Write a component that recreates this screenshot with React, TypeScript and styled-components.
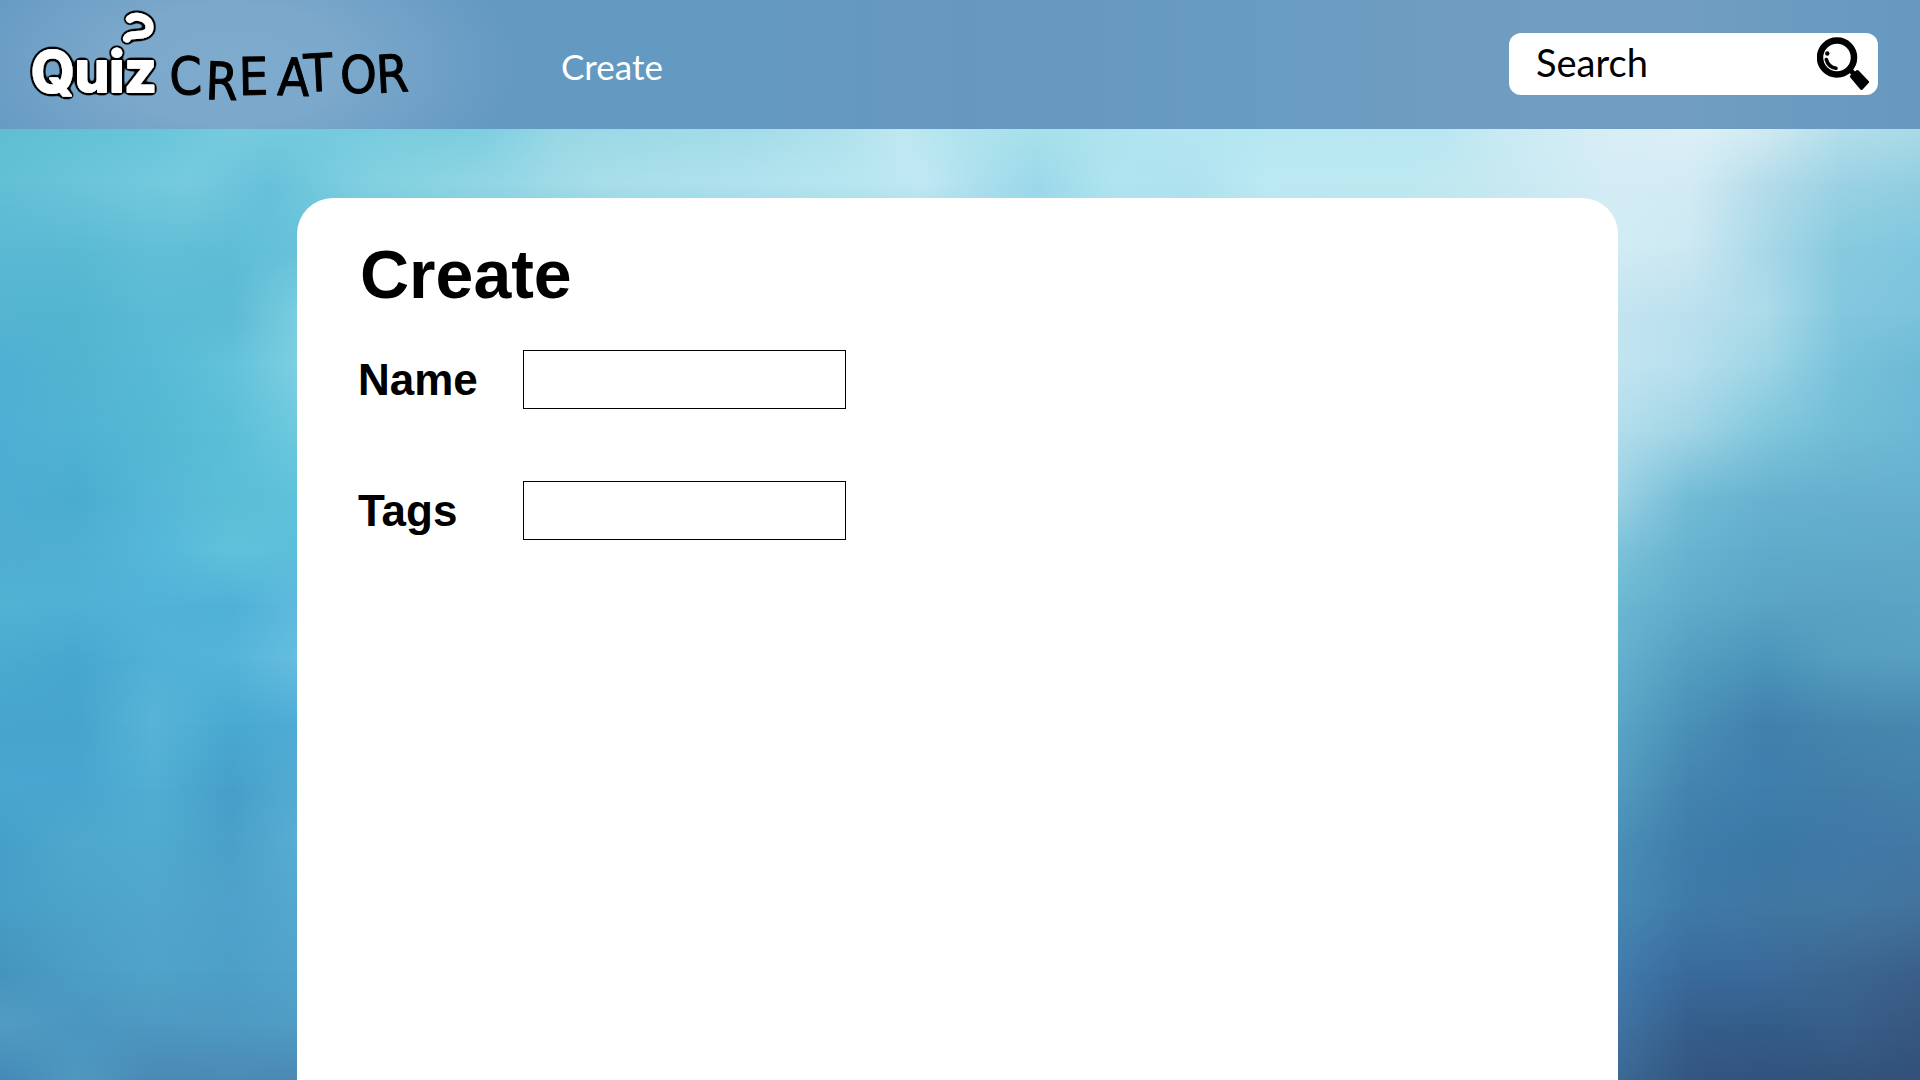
import React from "react";
import styled, { createGlobalStyle } from "styled-components";

type Stop = [number, string];
type Row = { y: number; stops: Stop[] };

const sideColumns = [0, 4, 8, 12, 16, 84, 88, 92, 96, 100];
const row = (y: number, colors: string): Row => ({
  y,
  stops: colors.split(" ").map((c, i) => [sideColumns[i], "#" + c] as Stop),
});

/* Colour rows of the water backdrop; each one blends into the next. */
const water: Row[] = [
  {
    y: 12,
    stops: [
      [0, "#5fbfd2"], [8, "#68c5da"], [12, "#77cbde"], [16, "#74cadd"],
      [21, "#7bcddf"], [25, "#7ccee0"], [29, "#98d8e5"], [39, "#a4dce8"],
      [44, "#b0e2ec"], [47, "#c0e8f1"], [50, "#b0e4ee"], [54, "#a8e0ea"],
      [59, "#b0e5f0"], [68, "#b8e8f3"], [75, "#b9e7f2"], [78, "#c8eaf3"],
      [84, "#d9eef6"], [89, "#dbeff6"], [92, "#d0eaf2"], [96, "#b2deea"],
      [100, "#aadbe6"],
    ],
  },
  {
    y: 17,
    stops: [
      [0, "#62bfd5"], [8, "#72c9de"], [10, "#76cadf"], [14, "#66c1da"],
      [19, "#80d0e0"], [26, "#94d6e4"], [31, "#a8dde9"], [39, "#b0e2ee"],
      [45, "#b8e6f0"], [48, "#c0e8f3"], [51, "#acdfed"], [54, "#9ad8ea"],
      [58, "#b0e4ef"], [62, "#aee2ef"], [66, "#bce9f2"], [73, "#bce8f0"],
      [77, "#c4e8f0"], [84, "#d4ecf5"], [88, "#d3ebf4"], [92, "#b4dcea"],
      [96, "#9ad2e4"], [100, "#92cee0"],
    ],
  },
  row(23, "5bb9d3 5bbad3 62bfd6 5fbdd5 68c3da d2ecf4 cce8f2 a8d8e8 87cade 80c7de"),
  row(29, "55b5d1 54b5d1 5bbbd5 5cbad4 7dcfe2 c3e4f0 bce0ee acdae9 82c7de 7cc3dc"),
  row(34, "4fafd3 53b4d0 57bad6 62c2da 80d0e4 c3e4f0 b6dfed 9cd4e5 78c2db 6fb9d6"),
  row(40, "4eafd4 51b3d3 54b8d3 5bbfd8 70cade b2deec a0d4e5 80c7dc 72bcd6 6cb7d4"),
  row(46, "4eaed2 4aadcf 55b7d6 5bbed7 5fc2da 9ed3e4 72bcd6 69b2d0 66b0ce 66b0ce"),
  row(51, "4fadd1 50afd3 55b7da 60c2da 5cbeda 7ec3da 68b3d0 60abcb 60aaca 60a9c8"),
  row(56, "51b2d3 50b1d5 52b3d8 50b1d7 60badd 6cb9d3 60abca 5aa3c4 5aa2c3 5ca4c3"),
  row(61, "4babd0 48a7cf 52b1d7 55b4d9 68bfe1 66b1ce 549fc2 4c95bb 559ec0 589fc0"),
  row(67, "47a5cd 46a4cd 58b4d7 49a9d1 50acd5 5ba7c7 4a90b7 4180ad 4686ae 4788af"),
  row(73, "49a6cf 49a5cf 52aed3 469fca 55add3 549cc0 4384af 3f7eac 427da8 4480aa"),
  row(78, "459fca 4fa8cc 50abcf 4aa0c8 5aafd5 4a90b7 3f7dab 3b78a5 4079a8 4378a5"),
  row(84, "479ec6 4ca3c9 51a6cc 4ea2ca 55a8ce 4789b4 3f7aa8 4077a2 4277a1 42739d"),
  row(90, "4594bd 4c9dc4 50a3c9 4d9fc7 53a4cb 417cae 3a6a9c 3b6a9b 3c668f 3a6089"),
  row(95, "529cc3 4a96c0 4d98c1 4d99c2 509dc4 4174a4 365e8c 345c88 375f8a 375780"),
  row(100, "4389b5 4f98c0 4a89b5 4c8ab4 4a88b2 3c6a96 33567f 30547e 33537b 32507a"),
];

const GlobalStyle = createGlobalStyle`
  *, *::before, *::after { box-sizing: border-box; }
  body {
    margin: 0;
    font-family: "Liberation Sans", Arial, sans-serif;
    color: #000;
  }
`;

const Page = styled.div`
  position: relative;
  isolation: isolate;
  display: flex;
  flex-direction: column;
  min-height: 100vh;
`;

const Backdrop = styled.div`
  position: absolute;
  inset: 0;
  z-index: -1;
  display: grid;
`;

const WaterRow = styled.div<{ $stops: Stop[]; $from: number; $to: number }>`
  grid-area: 1 / 1;
  background: linear-gradient(
    to right,
    ${(p) => p.$stops.map(([x, c]) => `${c} ${x}%`).join(", ")}
  );
  mask-image: linear-gradient(
    to bottom,
    transparent ${(p) => p.$from}%,
    #000 ${(p) => p.$to}%
  );
`;

const Header = styled.header`
  display: flex;
  align-items: center;
  height: 129px;
  padding: 0 42px 2px 24px;
  background:
    radial-gradient(ellipse 290px 150px at 230px 64px, #7fabcd 0%, #7ba8cb 40%, rgba(123, 168, 203, 0) 100%),
    linear-gradient(to right, #6398c2 0%, #6499c1 40%, #6697bf 50%, #699cc2 66%, #6f9cc0 75%, #709dc1 88%, #6698c0 100%);
`;

const LogoLink = styled.a`
  display: block;
  line-height: 0;
`;

const QuizWord = styled.text`
  font: 700 56px Inter, "Liberation Sans", sans-serif;
  fill: #fff;
  stroke: #fff;
  stroke-width: 2px;
  stroke-linejoin: round;
`;

const CreatorWord = styled.text`
  font: 400 52px "Liberation Sans Narrow", "DejaVu Sans Condensed", sans-serif;
  fill: #000;
  stroke: #000;
  stroke-width: 1px;
  stroke-linejoin: round;
`;

const Nav = styled.nav`
  flex: 1;
  padding: 4px 0 0 137px;
`;

const NavLink = styled.a`
  font: 400 35px/48px Lato, sans-serif;
  color: #fff;
  text-decoration: none;
`;

const SearchForm = styled.form`
  display: flex;
  align-items: center;
  width: 369px;
  height: 62px;
  padding-right: 9px;
  border-radius: 12px;
  background: #fff;
`;

const SearchInput = styled.input`
  flex: 1;
  min-width: 0;
  height: 62px;
  padding: 0 0 4px 27px;
  border: 0;
  outline: 0;
  background: transparent;
  font: 400 38px Lato, sans-serif;
  color: #000;

  &::placeholder {
    color: #000;
    opacity: 1;
  }
`;

const SearchButton = styled.button`
  padding: 0;
  border: 0;
  background: none;
  line-height: 0;
  cursor: pointer;
`;

const Main = styled.main`
  flex: 1;
  display: flex;
  padding: 69px 302px 0 297px;
`;

const Panel = styled.section`
  flex: 1;
  padding: 36px 61px;
  border-radius: 36px 36px 0 0;
  background: #fff;
`;

const Title = styled.h1`
  margin: 0 0 36px;
  padding-left: 2px;
  font-size: 68px;
  line-height: 80px;
  font-weight: 700;
`;

const Fields = styled.form`
  display: grid;
  grid-template-columns: 165px 323px;
  align-items: center;
  row-gap: 72px;
`;

const Label = styled.label`
  font-size: 44px;
  line-height: 48px;
  font-weight: 700;
`;

const TextBox = styled.input`
  width: 100%;
  height: 59px;
  padding: 0 12px;
  border: 1px solid #000;
  border-radius: 0;
  background: #fff;
  font-family: inherit;
  font-size: 28px;
`;

function Logo() {
  return (
    <svg width="400" height="127" viewBox="24 0 400 127" role="img" aria-label="Quiz Creator">
      <defs>
        <filter id="outline" x="-10%" y="-20%" width="120%" height="140%">
          <feGaussianBlur in="SourceAlpha" stdDeviation="2" />
          <feComponentTransfer result="edge">
            <feFuncA type="linear" slope="8" intercept="-0.6" />
          </feComponentTransfer>
          <feMerge>
            <feMergeNode in="edge" />
            <feMergeNode in="SourceGraphic" />
          </feMerge>
        </filter>
      </defs>
      <g filter="url(#outline)">
        <QuizWord x="31" y="92">Quiz</QuizWord>
        <path
          d="M130 19 C136 14 149.500 18 149.500 27 C149.500 34.500 142 35 136 35 C131 35 128 36 127 38.500"
          fill="none"
          stroke="#fff"
          strokeWidth="8"
          strokeLinecap="round"
        />
      </g>
      <CreatorWord
        x="170 205 239 277 305 340 377"
        y="95 99 95 95 92 93 93"
        rotate="-2 2 -1 2 -3 0 -3"
      >
        CREATOR
      </CreatorWord>
    </svg>
  );
}

function Magnifier() {
  return (
    <svg width="52" height="53" viewBox="0 0 52 53" aria-hidden="true">
      <circle cx="20" cy="20.500" r="17" fill="none" stroke="#000" strokeWidth="6.500" />
      <path d="M32 32 L38 38" stroke="#000" strokeWidth="5" />
      <circle cx="10.300" cy="16.500" r="2.200" />
      <path d="M9.300 22.500 C10.500 27 14 30.500 19 31.300" fill="none" stroke="#000" strokeWidth="3.600" strokeLinecap="round" />
      <path d="M34.500 39.500 L40.500 34.500 L50.500 45 L44.500 51.500 Z" stroke="#000" strokeWidth="3" strokeLinejoin="round" />
    </svg>
  );
}

export default function App() {
  return (
    <Page>
      <GlobalStyle />
      <Backdrop>
        {water.map((r, i) => (
          <WaterRow key={r.y} $stops={r.stops} $from={i ? water[i - 1].y : -1} $to={i ? r.y : 0} />
        ))}
      </Backdrop>
      <Header>
        <LogoLink href="#home">
          <Logo />
        </LogoLink>
        <Nav>
          <NavLink href="#create">Create</NavLink>
        </Nav>
        <SearchForm role="search" onSubmit={(e) => e.preventDefault()}>
          <SearchInput type="text" placeholder="Search" aria-label="Search" />
          <SearchButton type="submit" aria-label="Submit search">
            <Magnifier />
          </SearchButton>
        </SearchForm>
      </Header>
      <Main>
        <Panel>
          <Title>Create</Title>
          <Fields>
            <Label htmlFor="quiz-name">Name</Label>
            <TextBox id="quiz-name" type="text" />
            <Label htmlFor="quiz-tags">Tags</Label>
            <TextBox id="quiz-tags" type="text" />
          </Fields>
        </Panel>
      </Main>
    </Page>
  );
}
